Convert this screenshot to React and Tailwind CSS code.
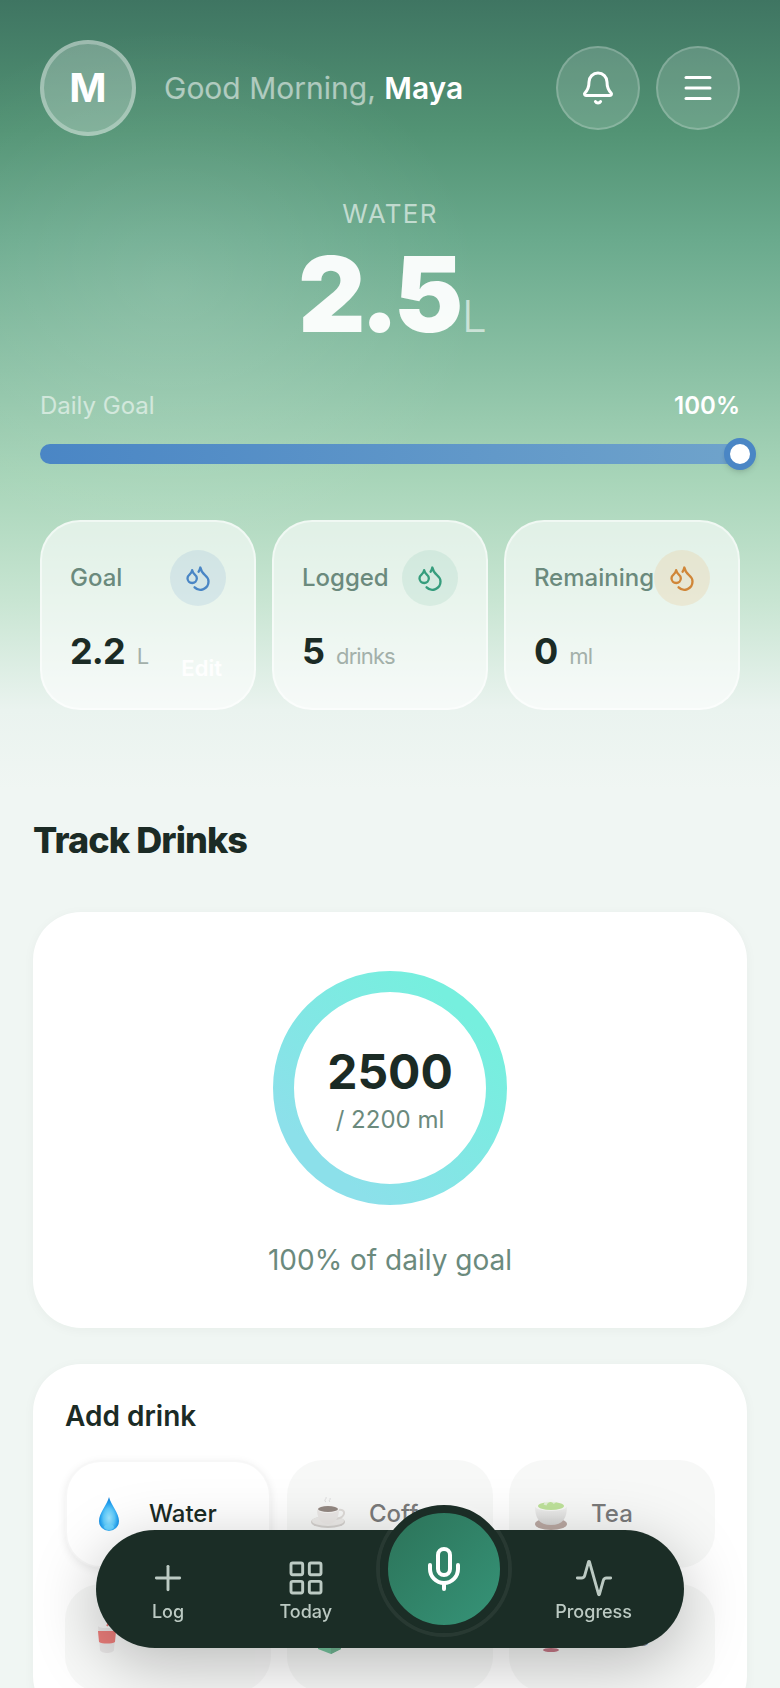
import React from 'react';
import { Activity, Bell, LayoutGrid, Menu, Mic, Plus } from 'lucide-react';

const stats = [
  { name: 'Goal', value: '2.2', unit: 'L', tint: 'bg-[#4a86c5]/12 text-[#4a86c5]', editable: true },
  { name: 'Logged', value: '5', unit: 'drinks', tint: 'bg-[#369d7d]/10 text-[#369d7d]' },
  { name: 'Remaining', value: '0', unit: 'ml', tint: 'bg-[#e8a04d]/15 text-[#d08638]' },
];

const DropsIcon = () => (
  <svg
    viewBox="0 0 24 24"
    className="size-7"
    fill="none"
    stroke="currentColor"
    strokeWidth="2"
    strokeLinecap="round"
    strokeLinejoin="round"
    aria-hidden="true"
  >
    <path d="M7 16.3c2.2 0 4-1.83 4-4.05 0-1.16-.57-2.26-1.71-3.19S7.29 6.75 7 5.3c-.29 1.45-1.14 2.84-2.29 3.76S3 11.1 3 12.25c0 2.22 1.8 4.05 4 4.05z" />
    <path d="M12.56 6.6A10.97 10.97 0 0 0 14 3.02c.5 2.5 2 4.9 4 6.5s3 3.5 3 5.5a6.98 6.98 0 0 1-11.91 4.97" />
  </svg>
);

const WaterDrop = () => (
  <svg viewBox="0 0 36 36" className="size-9" aria-hidden="true">
    <defs>
      <radialGradient id="drop" cx="0.5" cy="0.62" r="0.55">
        <stop offset="0" stopColor="#9be3fd" />
        <stop offset="0.5" stopColor="#5cc8f9" />
        <stop offset="0.8" stopColor="#22a0ef" />
        <stop offset="1" stopColor="#1787dc" />
      </radialGradient>
    </defs>
    <path d="M18 1C16 9 8 17 8 25a10 10 0 0 0 20 0C28 17 20 9 18 1z" fill="url(#drop)" />
    <ellipse cx="18" cy="31" rx="5" ry="3" fill="#6fd6ff" opacity="0.7" />
  </svg>
);

const CoffeeCup = () => (
  <svg viewBox="0 0 36 36" className="size-9" aria-hidden="true">
    <ellipse cx="17" cy="26" rx="17" ry="6" fill="#b9b4af" />
    <ellipse cx="17" cy="25" rx="16" ry="5" fill="#e2dfdb" />
    <path d="M27 14c8-2 9 7-2 9" fill="none" stroke="#c9c4bf" strokeWidth="2" />
    <path d="M6 13c0 8 3 15 11 15s11-7 11-15z" fill="#dedad6" />
    <ellipse cx="17" cy="13" rx="11" ry="4" fill="#f4f2f0" />
    <ellipse cx="17" cy="13" rx="10" ry="3" fill="#4d3a30" />
    <path d="M15 6c-3-2 1-3 0-5M19 6c-2-2 1-2 0-4" fill="none" stroke="#c4c4c4" strokeWidth="1" />
  </svg>
);

const TeaBowl = () => (
  <svg viewBox="0 0 36 36" className="size-9" aria-hidden="true">
    <defs>
      <linearGradient id="bowl" x1="0" y1="0" x2="0" y2="1">
        <stop offset="0" stopColor="#e9e9e8" />
        <stop offset="1" stopColor="#b9b9b8" />
      </linearGradient>
    </defs>
    <ellipse cx="18" cy="28" rx="16" ry="6" fill="#8d6f66" />
    <path d="M2 10c0 12 4 19 16 19s16-7 16-19z" fill="url(#bowl)" />
    <ellipse cx="18" cy="10" rx="16" ry="5" fill="#f4f4f2" />
    <ellipse cx="18" cy="10" rx="13" ry="4" fill="#94d058" />
    <path d="M12 9c2-5 7-6 10-2" fill="none" stroke="#eef3ea" strokeWidth="3" opacity="0.7" />
  </svg>
);

const SodaCup = () => (
  <svg viewBox="0 0 36 36" className="size-9" aria-hidden="true">
    <path d="M9 6h18l-2 24c-1 4-13 4-14 0z" fill="#dddada" />
    <path d="M9 11h18l-1 11c-3 2-13 2-16 0z" fill="#e02a24" />
    <ellipse cx="18" cy="6" rx="9" ry="2" fill="#f5f5f5" />
    <path d="M18 6l3-5" stroke="#e02a24" strokeWidth="2" />
  </svg>
);

const Carton = () => (
  <svg viewBox="0 0 36 36" className="size-9" aria-hidden="true">
    <path d="M7 9l12-6 11 6v20l-10 5-13-5z" fill="#1fa463" />
    <path d="M20 13l10-4v20l-10 5z" fill="#17894f" />
  </svg>
);

const WineGlass = () => (
  <svg viewBox="0 0 36 36" className="size-9" aria-hidden="true">
    <path d="M10 2h16c2 10-2 17-8 17S8 12 10 2z" fill="#a3213a" />
    <path d="M18 19v12" stroke="#c9a3aa" strokeWidth="2" />
    <ellipse cx="18" cy="30" rx="8" ry="2" fill="#a3213a" />
  </svg>
);

const drinks = [
  { name: 'Water', icon: WaterDrop, selected: true },
  { name: 'Coffee', icon: CoffeeCup },
  { name: 'Tea', icon: TeaBowl },
  { name: 'Soda', icon: SodaCup },
  { name: 'Juice', icon: Carton },
  { name: 'Wine', icon: WineGlass },
];

const RoundButton = ({ label, children }) => (
  <button
    type="button"
    aria-label={label}
    className="flex size-21 items-center justify-center rounded-full border-2 border-white/20 bg-white/15 text-white"
  >
    {children}
  </button>
);

const Header = () => (
  <header className="flex items-center justify-between">
    <div className="flex items-center gap-7">
      <div className="flex size-24 items-center justify-center rounded-full border-4 border-white/30 bg-white/25 text-[40px] font-bold text-white">
        M
      </div>
      <p className="text-[30px] leading-9 text-white/55">
        Good Morning, <span className="font-semibold text-white">Maya</span>
      </p>
    </div>
    <div className="flex gap-4">
      <RoundButton label="Notifications">
        <Bell className="size-9" strokeWidth={2} />
      </RoundButton>
      <RoundButton label="Menu">
        <Menu className="size-9" strokeWidth={2} />
      </RoundButton>
    </div>
  </header>
);

const GoalBar = () => (
  <div className="mt-10">
    <div className="flex justify-between text-2xl leading-7">
      <span className="text-white/55">Daily Goal</span>
      <span className="font-semibold text-white">100%</span>
    </div>
    <div
      role="progressbar"
      aria-label="Daily Goal"
      aria-valuenow={100}
      className="relative mt-6 h-5 rounded-full bg-linear-to-r from-[#4a86c5] to-[#6fa3cb]"
    >
      <span className="absolute -top-1.5 -right-4 size-8 rounded-full border-6 border-[#4a86c5] bg-white shadow-md" />
    </div>
  </div>
);

const StatCard = ({ stat }) => (
  <div className="relative rounded-[40px] border-2 border-white/50 bg-white/60 p-7">
    <div className="flex items-center justify-between">
      <span className="text-2xl font-medium text-[#6b8a7d]">{stat.name}</span>
      <span className={`flex size-14 shrink-0 items-center justify-center rounded-full ${stat.tint}`}>
        <DropsIcon />
      </span>
    </div>
    <p className="mt-4 flex items-baseline gap-3 text-4xl leading-[58px] tracking-tight">
      <span className="font-bold text-[#1b2b25]">{stat.value}</span>
      <span className="text-[22px] leading-7 text-[#a3b0aa]">{stat.unit}</span>
    </p>
    {stat.editable && (
      <button type="button" className="absolute right-8 bottom-6 text-[22px] leading-8 font-semibold text-white/90">
        Edit
      </button>
    )}
  </div>
);

const ProgressRing = () => (
  <section className="mt-12 flex flex-col items-center rounded-[48px] bg-white pt-14 pb-12 shadow-[0_2px_12px_rgba(27,45,38,0.04)]">
    <div className="relative size-60">
      <svg viewBox="0 0 240 240" className="size-full" aria-hidden="true">
        <defs>
          <linearGradient id="ring" x1="0.85" y1="0.15" x2="0.2" y2="0.85">
            <stop offset="0" stopColor="#76efde" />
            <stop offset="1" stopColor="#8ce0ea" />
          </linearGradient>
        </defs>
        <circle cx="120" cy="120" r="106.5" fill="none" stroke="url(#ring)" strokeWidth="21" />
      </svg>
      <div className="absolute inset-0 flex flex-col items-center justify-center pt-2">
        <span className="text-5xl leading-14 font-bold text-[#1b2b25]">2500</span>
        <span className="text-2xl leading-10 text-[#6b8a7d]">/ 2200 ml</span>
      </div>
    </div>
    <p className="mt-8 text-[28px] leading-10 text-[#6b8a7d]">100% of daily goal</p>
  </section>
);

const DrinkTile = ({ drink }) => (
  <button
    type="button"
    className={`flex h-27 items-center gap-[22px] rounded-[36px] pl-6 text-2xl font-medium ${
      drink.selected
        ? 'border-2 border-black/3 bg-white text-[#1b2b25] shadow-[0_2px_8px_rgba(0,0,0,0.08)]'
        : 'bg-[#f3f4f3] text-[#222222] opacity-60'
    }`}
  >
    <drink.icon />
    {drink.name}
  </button>
);

const NavItem = ({ icon: Icon, label }) => (
  <button
    type="button"
    className="flex flex-col items-center gap-0.5 px-11 pt-1 text-[18px] leading-6 font-medium text-[#bccac3]"
  >
    <Icon className="size-10" strokeWidth={1.75} />
    {label}
  </button>
);

const BottomNav = () => (
  <nav className="fixed inset-x-24 bottom-10 flex h-[118px] items-center justify-between rounded-full bg-[#1b2d26] px-2 shadow-[0_16px_64px_rgba(0,0,0,0.25)]">
    <NavItem icon={Plus} label="Log" />
    <NavItem icon={LayoutGrid} label="Today" />
    <button
      type="button"
      aria-label="Voice log"
      className="mb-10 flex size-32 shrink-0 items-center justify-center rounded-full border-8 border-[#1b2d26] bg-linear-to-br from-[#2c7359] to-[#369478] text-white shadow-[0_0_0_4px_rgba(255,255,255,0.06)]"
    >
      <Mic className="size-12" />
    </button>
    <NavItem icon={Activity} label="Progress" />
  </nav>
);

export default function App() {
  return (
    <div className="h-screen overflow-hidden bg-[#f0f6f3] font-[Inter,sans-serif] text-[#1b2b25]">
      <div className="bg-[radial-gradient(ellipse_at_22%_36%,rgba(255,255,255,0.12),transparent_36%),linear-gradient(180deg,#3f7562_0px,#529374_130px,#6aaa8d_240px,#8bc1a5_370px,#a8d5b9_480px,#c8e5d2_600px,#eaf3ef_710px,#f0f6f3_790px)] p-10 pb-24">
        <Header />
        <div className="mt-14 flex flex-col items-center">
          <h2 className="text-[26px] leading-11 tracking-wider text-white/60">WATER</h2>
          <p className="flex items-baseline gap-1 text-[104px] leading-[116px] tracking-tighter text-white/95">
            <span className="font-black">2.5</span>
            <span className="text-[44px] leading-none font-light text-white/60">L</span>
          </p>
        </div>
        <GoalBar />
        <div className="mt-14 grid grid-cols-[1fr_1fr_1fr] gap-4">
          {stats.map((stat) => (
            <StatCard key={stat.name} stat={stat} />
          ))}
        </div>
      </div>

      <main className="px-[33px]">
        <h1 className="mt-2.5 text-4xl leading-12 font-extrabold tracking-tight">Track Drinks</h1>
        <ProgressRing />
        <section className="mt-9 rounded-[48px] bg-white p-8 shadow-[0_2px_12px_rgba(27,45,38,0.04)]">
          <h2 className="text-[28px] leading-10 font-semibold">Add drink</h2>
          <div className="mt-6 grid grid-cols-3 gap-4">
            {drinks.map((drink) => (
              <DrinkTile key={drink.name} drink={drink} />
            ))}
          </div>
        </section>
      </main>

      <BottomNav />
    </div>
  );
}
